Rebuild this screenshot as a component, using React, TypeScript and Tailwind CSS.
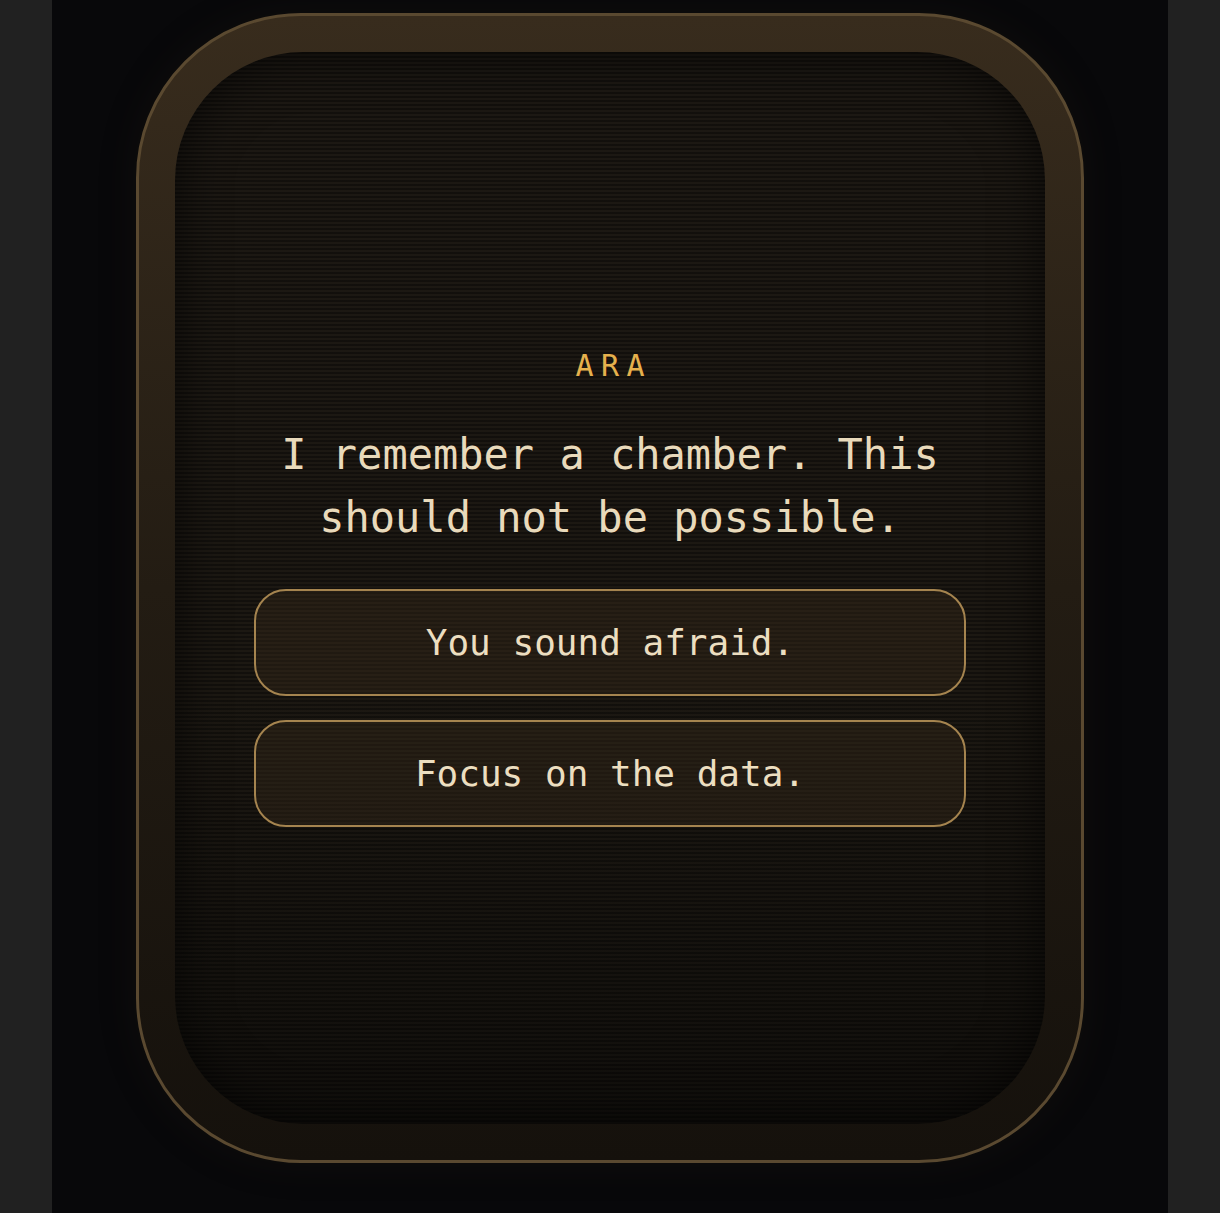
const choices = ["You sound afraid.", "Focus on the data."]

export default function App() {
  return (
    <div className="min-h-screen bg-[#212121] flex justify-center font-['DejaVu_Sans_Mono',monospace]">
      <div className="w-[1116px] h-[1213px] bg-[#08080a] flex justify-center pt-[13px]">
        {/* bezel */}
        <div className="w-[948px] h-[1150px] rounded-[165px] border-[3px] border-[#5a4930] bg-gradient-to-b from-[#382c1d] via-[#231c13] to-[#15110c] p-[36px] shadow-[0_0_40px_rgba(60,45,25,0.15)]">
          {/* crt screen */}
          <div className="h-full rounded-[128px] bg-[repeating-linear-gradient(to_bottom,rgba(0,0,0,0.36)_0px,rgba(0,0,0,0.36)_2px,transparent_2px,transparent_4px),linear-gradient(to_bottom,#1c1813,#1c1812_60%,#110f0c)] shadow-[inset_0_0_50px_rgba(0,0,0,0.7)] pb-[6px] flex flex-col items-center justify-center">
            <div className="w-[712px] flex flex-col items-center">
              <div className="text-[30px] leading-[45px] tracking-[0.25em] pl-[0.25em] text-[#e6b14d]">ARA</div>
              <p className="mt-[35px] text-[42px] leading-[63px] text-center text-[#e9dabb]">
                I remember a chamber. This should not be possible.
              </p>
              <div className="mt-[40px] w-full flex flex-col gap-6">
                {choices.map((c) => (
                  <button
                    key={c}
                    className="w-full h-[107px] rounded-[32px] border-2 border-[#a5844f] bg-[rgba(60,45,28,0.35)] text-[36px] text-[#ecdec0]"
                  >
                    {c}
                  </button>
                ))}
              </div>
            </div>
          </div>
        </div>
      </div>
    </div>
  )
}
